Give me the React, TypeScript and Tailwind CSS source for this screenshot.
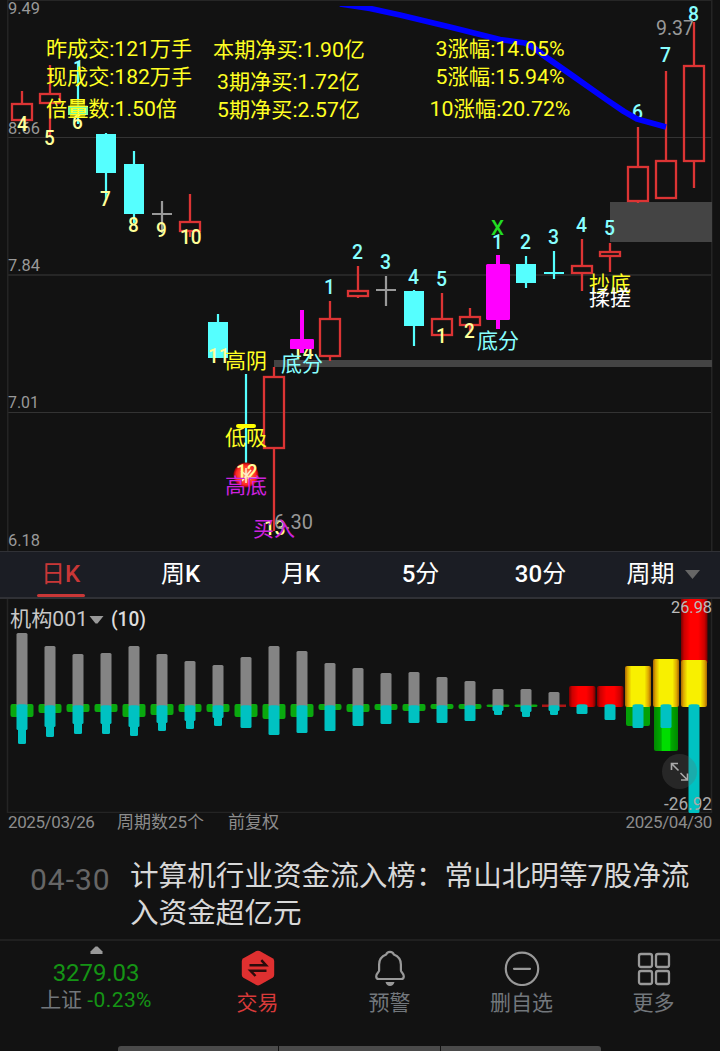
import React from 'react'

const RED = '#dc3434'
const CYAN = '#55ffff'
const GRAY = '#999999'
const PINK = '#ff00ff'
const YELLOW = '#ffff22'
const PALE = '#ffff99'
const AQUA = '#88ffff'

const colX = (i: number) => 22 + i * 28

type LabelProps = {
  x: number
  y: number
  w: number
  text: string
  fill: string
  size?: number
  weight?: number
}

// x is the left edge, y the baseline
const Label = ({ x, y, w, text, fill, size = 21, weight = 400 }: LabelProps) => (
  <text
    x={x}
    y={y}
    fontSize={size}
    fontWeight={weight}
    fill={fill}
    textLength={w}
    lengthAdjust="spacingAndGlyphs"
  >
    {text}
  </text>
)

type Candle = {
  kind: 'up' | 'down' | 'pink' | 'cross' | 'dash'
  high: number
  top: number
  bottom: number
  low: number
}

const candles: Candle[] = [
  { kind: 'up', high: 91, top: 103, bottom: 121, low: 121 },
  { kind: 'up', high: 65, top: 93, bottom: 104, low: 137 },
  { kind: 'down', high: 62, top: 106, bottom: 115, low: 124 },
  { kind: 'down', high: 133, top: 134, bottom: 173, low: 200 },
  { kind: 'down', high: 151, top: 164, bottom: 214, low: 223 },
  { kind: 'cross', high: 201, top: 214, bottom: 214, low: 233 },
  { kind: 'up', high: 194, top: 221, bottom: 232, low: 237 },
  { kind: 'down', high: 314, top: 322, bottom: 358, low: 358 },
  { kind: 'down', high: 374, top: 426, bottom: 426, low: 480 },
  { kind: 'up', high: 367, top: 376, bottom: 449, low: 531 },
  { kind: 'pink', high: 310, top: 339, bottom: 349, low: 353 },
  { kind: 'up', high: 301, top: 318, bottom: 357, low: 361 },
  { kind: 'up', high: 266, top: 290, bottom: 297, low: 298 },
  { kind: 'cross', high: 276, top: 290, bottom: 290, low: 306 },
  { kind: 'down', high: 290, top: 291, bottom: 326, low: 346 },
  { kind: 'up', high: 293, top: 318, bottom: 336, low: 336 },
  { kind: 'up', high: 308, top: 316, bottom: 326, low: 331 },
  { kind: 'pink', high: 255, top: 264, bottom: 320, low: 329 },
  { kind: 'down', high: 256, top: 264, bottom: 283, low: 288 },
  { kind: 'dash', high: 251, top: 273, bottom: 273, low: 279 },
  { kind: 'up', high: 239, top: 265, bottom: 274, low: 291 },
  { kind: 'up', high: 243, top: 251, bottom: 257, low: 272 },
  { kind: 'up', high: 127, top: 166, bottom: 202, low: 203 },
  { kind: 'up', high: 71, top: 160, bottom: 199, low: 199 },
  { kind: 'up', high: 22, top: 65, bottom: 162, low: 188 },
]

const CandleShape = ({ c, x }: { c: Candle; x: number }) => {
  if (c.kind === 'up') {
    return (
      <g stroke={RED} strokeWidth={2.3} fill="none">
        <path d={`M${x} ${c.high}V${c.top}M${x} ${c.bottom}V${c.low}`} />
        <rect x={x - 10} y={c.top + 1} width={20} height={c.bottom - c.top - 2} />
      </g>
    )
  }
  if (c.kind === 'pink') {
    return (
      <g fill={PINK}>
        <rect x={x - 2} y={c.high} width={4} height={c.low - c.high} />
        <rect x={x - 12} y={c.top} width={24} height={c.bottom - c.top} rx={1.5} />
      </g>
    )
  }
  const color = c.kind === 'cross' ? GRAY : CYAN
  return (
    <g fill={color}>
      <rect x={x - 1.1} y={c.high} width={2.2} height={c.low - c.high} />
      {c.kind === 'down' ? (
        <rect x={x - 10} y={c.top} width={20} height={c.bottom - c.top} />
      ) : (
        <rect x={x - 10} y={c.top - 1} width={20} height={2} />
      )}
    </g>
  )
}

// [text, left, baseline]
const falling: [string, number, number][] = [
  ['4', 17, 131],
  ['5', 44, 145],
  ['6', 72, 129],
  ['7', 100, 206],
  ['8', 128, 232],
  ['9', 156, 237],
  ['10', 180, 244],
  ['11', 208, 363],
  ['12', 236, 479],
  ['13', 264, 535],
  ['14', 292, 359],
  ['1', 436, 343],
  ['2', 464, 338],
]

const rising: [string, number, number][] = [
  ['1', 73, 75],
  ['1', 324, 294],
  ['2', 352, 259],
  ['3', 380, 269],
  ['4', 408, 284],
  ['5', 436, 286],
  ['1', 492, 249],
  ['2', 520, 249],
  ['3', 548, 244],
  ['4', 576, 232],
  ['5', 604, 235],
  ['6', 632, 119],
  ['7', 660, 62],
  ['8', 688, 21],
]

const stats: [string, number, number, number][] = [
  ['昨成交:121万手', 46, 56, 146],
  ['现成交:182万手', 46, 84, 146],
  ['倍量数:1.50倍', 46, 116, 131],
  ['本期净买:1.90亿', 213, 57, 152],
  ['3期净买:1.72亿', 217, 89, 143],
  ['5期净买:2.57亿', 217, 117, 143],
  ['3涨幅:14.05%', 435.5, 56, 129],
  ['5涨幅:15.94%', 435.5, 84, 129],
  ['10涨幅:20.72%', 429.5, 116, 141],
]

const PriceChart = () => (
  <svg className="block h-[551px] w-[720px]" viewBox="0 0 720 551">
    <defs>
      <radialGradient id="ball">
        <stop offset="0" stopColor="#ffaa88" />
        <stop offset="0.5" stopColor="#ff5533" />
        <stop offset="0.8" stopColor="#ff2222" />
        <stop offset="1" stopColor="#880000" />
      </radialGradient>
      <clipPath id="plot">
        <rect x={0} y={6} width={720} height={545} />
      </clipPath>
    </defs>
    <g fill="#333333">
      <rect x={8} y={0} width={704} height={1} fill="#262626" />
      <rect x={8} y={137} width={704} height={1} />
      <rect x={8} y={274} width={704} height={2} fill="#262626" />
      <rect x={8} y={412} width={704} height={1} />
      <rect x={7} y={0} width={1.5} height={551} fill="#242424" />
      <rect x={711} y={0} width={1.5} height={551} fill="#242424" />
    </g>
    <Label x={8} y={14} w={32} text="9.49" fill={GRAY} size={17} />
    <Label x={8} y={134} w={32} text="8.66" fill={GRAY} size={17} />
    <Label x={8} y={271} w={32} text="7.84" fill={GRAY} size={17} />
    <Label x={8} y={408} w={31} text="7.01" fill={GRAY} size={17} />
    <Label x={8} y={546} w={32} text="6.18" fill={GRAY} size={17} />

    <rect x={610} y={202} width={102} height={40} fill="#444444" />
    <rect x={274} y={360} width={438} height={7} fill="#444444" />

    {candles.map((c, i) => (
      <CandleShape key={i} c={c} x={colX(i)} />
    ))}

    <rect x={70} y={99} width={15} height={18} fill="#c6bd00" opacity={0.75} />
    <rect x={68} y={106} width={20} height={9} fill="#77ff99" />
    <rect x={236} y={424} width={20} height={4} rx={2} fill="#ffff00" />
    <circle cx={246} cy={475} r={12.5} fill="url(#ball)" />
    <path d="M241 471l10 8M251 470l-9 11M246 468v15" stroke="#ffeecc" strokeWidth={1.5} />

    {falling.map(([t, x, y]) => (
      <Label key={t + x} x={x} y={y} w={t.length * 10.8} text={t} fill={PALE} weight={500} />
    ))}
    {rising.map(([t, x, y]) => (
      <Label key={t + x} x={x} y={y} w={11} text={t} fill={AQUA} weight={500} />
    ))}
    <Label x={491} y={235} w={13} text="X" fill="#22dd22" weight={500} />
    {/* the body of this one hides the top of its count */}
    <CandleShape c={candles[10]} x={colX(10)} />

    <path
      d="M340 4L370 8.5L400 15L450 27L500 39.5L525 43Q534 47 543 55L573 76L607 100L624 111.5L637 119L666 127"
      fill="none"
      stroke="#0000ff"
      strokeWidth={5.8}
      strokeLinejoin="round"
      clipPath="url(#plot)"
    />

    <Label x={656} y={35} w={38} text="9.37" fill={GRAY} size={21} />
    <Label x={274} y={529} w={39} text="6.30" fill={GRAY} size={21} />

    {stats.map(([t, x, y, w]) => (
      <Label key={t} x={x} y={y} w={w} text={t} fill={YELLOW} />
    ))}
    <Label x={225} y={368} w={42} text="高阴" fill={YELLOW} />
    <Label x={225} y={445} w={42} text="低吸" fill={YELLOW} />
    <Label x={225} y={493} w={42} text="高底" fill="#cc22dd" />
    <Label x={253} y={536} w={42} text="买入" fill="#cc22dd" />
    <Label x={281} y={371} w={42} text="底分" fill={AQUA} />
    <Label x={477} y={348} w={42} text="底分" fill={AQUA} />
    <Label x={589} y={291} w={42} text="抄底" fill={YELLOW} />
    <Label x={589} y={305} w={42} text="揉搓" fill="#ffffff" />
    <path d="M274 449V531" stroke={RED} strokeWidth={2} />
  </svg>
)

const tabs = [
  ['', '日', 'K'],
  ['', '周', 'K'],
  ['', '月', 'K'],
  ['5', '分', ''],
  ['30', '分', ''],
]

const PeriodTabs = () => (
  <nav className="grid h-[48px] grid-cols-6 border-t border-b-2 border-[#303136] bg-[#1b1d24] text-[24px] leading-none text-white">
    {tabs.map(([before, word, after], i) => (
      <div
        key={before + word + after}
        className={
          i === 0
            ? 'flex flex-col items-center justify-between pt-[10px] pl-[1px] text-[#c93737]'
            : 'flex flex-col items-center justify-between pt-[10px] pl-[1px]'
        }
      >
        <span>
          <span className="font-medium">{before}</span>
          {word}
          <span className="font-medium">{after}</span>
        </span>
        {i === 0 && <span className="h-[3px] w-12 rounded-full bg-[#c93737]" />}
      </div>
    ))}
    <div className="flex items-start justify-center gap-[10px] pt-[10px] pl-[6px]">
      <span>周期</span>
      <svg className="mt-[8px] h-[9px] w-[15px]" viewBox="0 0 15 9">
        <path d="M0 0H15L7.5 9Z" fill="#666666" />
      </svg>
    </div>
  </nav>
)

const grayTops = [
  633, 646, 654, 653, 646, 654, 661, 665, 657, 646, 651, 663, 668, 673, 672, 677, 681, 689, 689, 692,
]
const greenEnds = [
  717, 713, 712, 712, 717, 715, 712, 712, 717, 719, 717, 710, 712, 710, 711, 709, 709, 707, 707,
]
// [end of the wide part, end of the tip]
const cyanEnds = [
  [730, 744], [727, 737], [724, 734], [724, 734], [727, 736], [723, 731], [721, 729], [718, 726],
  [728, 728], [735, 735], [733, 733], [731, 731], [726, 726], [724, 724], [723, 723], [723, 723],
  [721, 721], [711, 715], [712, 717], [711, 715], [714, 714], [720, 720], [728, 728], [728, 728],
  [813, 813],
]

const FundChart = () => (
  <svg className="block h-[214px] w-[720px]" viewBox="0 599 720 214">
    <defs>
      <linearGradient id="red">
        <stop offset="0" stopColor="#770000" />
        <stop offset="0.12" stopColor="#cc0000" />
        <stop offset="0.35" stopColor="#ff0000" />
        <stop offset="0.65" stopColor="#ff0000" />
        <stop offset="0.88" stopColor="#cc0000" />
        <stop offset="1" stopColor="#770000" />
      </linearGradient>
      <linearGradient id="yellow">
        <stop offset="0" stopColor="#aa6600" />
        <stop offset="0.1" stopColor="#ddaa00" />
        <stop offset="0.25" stopColor="#f8f000" />
        <stop offset="0.75" stopColor="#f8f000" />
        <stop offset="0.9" stopColor="#ddaa00" />
        <stop offset="1" stopColor="#aa6600" />
      </linearGradient>
      <linearGradient id="green">
        <stop offset="0" stopColor="#008800" />
        <stop offset="0.3" stopColor="#00aa00" />
        <stop offset="0.34" stopColor="#00dd00" />
        <stop offset="0.66" stopColor="#00dd00" />
        <stop offset="0.7" stopColor="#00aa00" />
        <stop offset="1" stopColor="#008800" />
      </linearGradient>
    </defs>
    <path d="M7.5 599V812.5H711.5V599" fill="none" stroke="#242424" strokeWidth={1.5} />

    {greenEnds.map((y, i) => {
      const top = i > 16 ? 704.5 : 704
      return (
        <rect key={i} x={colX(i) - 11.5} y={top} width={23} height={y - top} rx={2} fill="#0aa80f" />
      )
    })}
    <rect x={542} y={704.5} width={24} height={2.5} fill="#aa1515" />

    <rect x={569} y={686} width={26.5} height={21} rx={2} fill="url(#red)" />
    <rect x={597} y={686} width={26.5} height={21} rx={2} fill="url(#red)" />
    <rect x={681} y={599} width={26.5} height={64} fill="url(#red)" />
    <rect x={626} y={705} width={24} height={21} rx={2} fill="#04a008" />
    <rect x={654} y={705} width={24} height={46} rx={2} fill="url(#green)" />
    <rect x={625} y={666} width={26} height={41} rx={2} fill="url(#yellow)" />
    <rect x={653} y={659} width={26} height={48} rx={2} fill="url(#yellow)" />
    <rect x={681} y={660} width={26} height={47} rx={2} fill="url(#yellow)" />

    {grayTops.map((y, i) => (
      <rect key={i} x={colX(i) - 5.5} y={y} width={11} height={707 - y} rx={1.5} fill="#848484" />
    ))}
    {cyanEnds.map(([wide, tip], i) => {
      const x = colX(i)
      const top = i > 19 || i === 0 ? 704.5 : 705.5
      return (
        <g key={i} fill="#00c2c2">
          <rect x={x - 5.5} y={top} width={11} height={wide - top} rx={1.5} />
          <rect x={x - 4} y={top} width={8} height={tip - top} rx={1.5} />
        </g>
      )
    })}

    <circle cx={679.5} cy={771.5} r={17.5} fill="#666666" opacity={0.25} />
    <g fill="none" stroke="#aaaaaa" strokeWidth={1.6}>
      <path d="M671.5 770V763.5H678M672 764L678.5 770.5" />
      <path d="M687.5 773.5V780H681M687 779.5L680.5 773" />
    </g>

    <Label x={10} y={626} w={78} text="机构001" fill="#c8c8c8" size={21} />
    <path d="M89.5 616H103.5L97.5 623.5H95.5Z" fill="#999999" />
    <Label x={111} y={626} w={35} text="(10)" fill="#dddddd" size={20} weight={500} />
    <Label x={671} y={613} w={41} text="26.98" fill="#bbbbbb" size={17} />
    <Label x={664} y={810} w={48} text="-26.92" fill="#aaaaaa" size={17.5} />
  </svg>
)

const ChartFooter = () => (
  <div className="flex h-[28px] items-start px-2 text-[17px] leading-[18px] text-[#8c8c8c]">
    <span className="w-[109px] tracking-[-0.4px]">2025/03/26</span>
    <span className="w-[111px]">周期数25个</span>
    <span className="flex-1">前复权</span>
    <span className="tracking-[-0.4px]">2025/04/30</span>
  </div>
)

const News = () => (
  <div className="flex h-[98px] pt-[17px] pl-[30px]">
    <span className="w-[100px] pt-[2px] text-[30px] leading-[40px] tracking-[1px] text-[#666666]">04-30</span>
    <p className="text-[28.6px] leading-[36.5px] whitespace-nowrap text-[#d8d8d8]">
      计算机行业资金流入榜：常山北明等7股净流
      <br />
      入资金超亿元
    </p>
  </div>
)

const TradeIcon = () => (
  <svg className="h-9 w-9" viewBox="0 0 36 36">
    <path
      d="M16.3 1.1Q18 0.2 19.7 1.1L32.6 8.2Q34.2 9.2 34.2 11V25Q34.2 26.8 32.6 27.8L19.7 35Q18 35.8 16.3 35L3.4 27.8Q1.8 26.8 1.8 25V11Q1.8 9.2 3.4 8.2Z"
      fill="#df3030"
    />
    <path
      d="M9.5 15.3H26L21.3 10.2M26.5 20.8H10.5L15.5 26"
      fill="none"
      stroke="#2a0c0c"
      strokeWidth={2.5}
    />
  </svg>
)

const BellIcon = () => (
  <svg className="h-9 w-9" viewBox="0 0 36 36" fill="none" stroke="#999999" strokeWidth={2.2}>
    <path
      d="M18 1.8C15.8 1.8 14.6 3 14.2 4.6C9.6 6.4 7.1 9.8 7.1 14.5V20.5C7.1 22 4.2 23.4 4.2 26.2C4.2 28 5 29 6.8 29H29.2C31 29 31.8 28 31.8 26.2C31.8 23.4 28.9 22 28.9 20.5V14.5C28.9 9.8 26.4 6.4 21.8 4.6C21.4 3 20.2 1.8 18 1.8Z"
      strokeLinejoin="round"
    />
    <path d="M13.5 32H22.5C21.8 34.6 20.2 36 18 36C15.8 36 14.2 34.6 13.5 32Z" fill="#999999" stroke="none" />
  </svg>
)

const MinusIcon = () => (
  <svg className="h-9 w-9" viewBox="0 0 36 36" fill="none" stroke="#999999" strokeWidth={2.2}>
    <circle cx={18} cy={18.8} r={16.2} />
    <path d="M10 18.8H26" strokeLinecap="round" />
  </svg>
)

const MoreIcon = () => (
  <svg className="h-9 w-9" viewBox="0 0 36 36" fill="none" stroke="#999999" strokeWidth={2.3}>
    <rect x={3} y={4} width={13} height={13} rx={2} />
    <rect x={20} y={4} width={13} height={13} rx={2} />
    <rect x={3} y={21} width={13} height={13} rx={2} />
    <rect x={20} y={21} width={13} height={13} rx={2} />
  </svg>
)

const actions = [
  { name: '交易', icon: <TradeIcon />, color: 'text-[#d93a3a]' },
  { name: '预警', icon: <BellIcon />, color: 'text-[#72777c]' },
  { name: '删自选', icon: <MinusIcon />, color: 'text-[#72777c]' },
  { name: '更多', icon: <MoreIcon />, color: 'text-[#72777c]' },
]

const BottomBar = () => (
  <footer className="flex h-[107px] border-t-2 border-[#202020]">
    <div className="flex w-48 flex-col items-center pt-[5px]">
      <svg className="h-[8px] w-[13px]" viewBox="0 0 13 8">
        <path d="M5.5 0.5H7.5L12.5 5.5V8H0.5V5.5Z" fill="#999999" />
      </svg>
      <span className="mt-[7px] text-[24px] leading-[24px] tracking-[-0.1px] text-[#159415]">3279.03</span>
      <span className="mt-[3px] text-[21px] leading-[24px] whitespace-nowrap text-[#72777c]">
        上证 <span className="tracking-[0.4px] text-[#159415]">-0.23%</span>
      </span>
    </div>
    {actions.map((a) => (
      <div key={a.name} className={'flex w-[132px] flex-col items-center pt-[9px] pr-[1px] text-[21px] leading-[24px] ' + a.color}>
        {a.icon}
        <span className="mt-[5px]">{a.name}</span>
      </div>
    ))}
  </footer>
)

const App = () => {
  return (
    <main className="h-[1051px] w-[720px] overflow-hidden bg-[#121212] font-[Roboto,'Noto_Sans_CJK_SC',sans-serif]">
      <PriceChart />
      <PeriodTabs />
      <FundChart />
      <ChartFooter />
      <News />
      <BottomBar />
      <div className="ml-[118px] grid h-[5px] w-[483px] grid-cols-3 gap-px overflow-hidden rounded-t-[3px]">
        <span className="bg-[#4a4a4a]" />
        <span className="bg-[#4a4a4a]" />
        <span className="bg-[#4a4a4a]" />
      </div>
    </main>
  )
}

export default App
